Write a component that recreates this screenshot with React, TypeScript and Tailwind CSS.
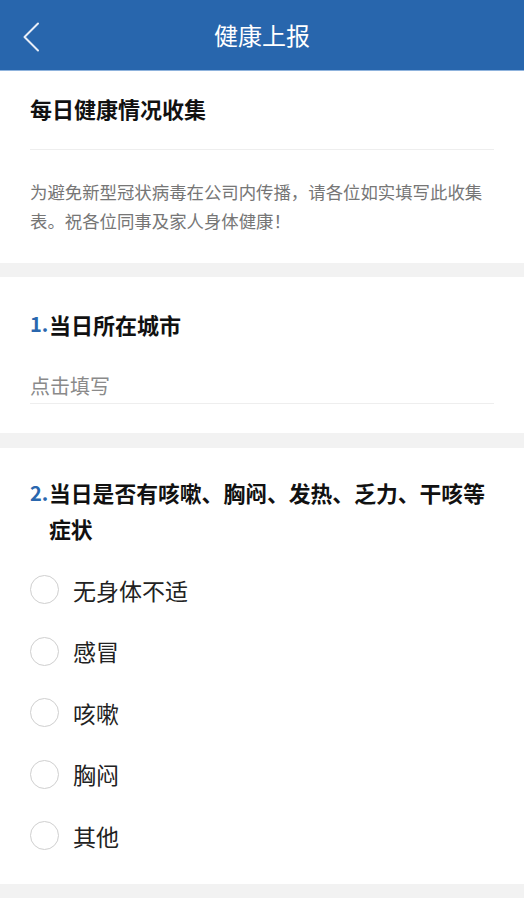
import React from "react";

const font = { fontFamily: '"Noto Sans CJK SC", "Noto Sans", sans-serif' };

const options = ["无身体不适", "感冒", "咳嗽", "胸闷", "其他"];

export default function App() {
  return (
    <div className="w-[524px] min-h-[898px] bg-[#f2f2f2]" style={font}>
      <div className="h-[71px] bg-[#2866ad] border-b border-[#8fb3dd] flex items-center relative">
        <svg className="absolute left-[22px] top-[22px]" width="18" height="30" viewBox="0 0 18 30" fill="none">
          <path d="M16 1.5 L2.5 15 L16 28.5" stroke="#e8eef7" strokeWidth="2" strokeLinecap="round" strokeLinejoin="round" />
        </svg>
        <div className="flex-1 text-center text-white text-[24px] leading-[32px]">健康上报</div>
      </div>

      <div className="bg-white px-[30px] pt-[22px] pb-[28px]">
        <div className="text-[22px] leading-[30px] font-bold text-[#111]">每日健康情况收集</div>
        <div className="mt-[26px] border-t border-[#eeeeee]" />
        <div className="mt-[27px] text-[17.4px] leading-[29px] text-[#767676]">
          为避免新型冠状病毒在公司内传播，请各位如实填写此收集表。祝各位同事及家人身体健康！
        </div>
      </div>

      <div className="h-[14px]" />

      <div className="bg-white px-[30px] pt-[32px] pb-[29px]">
        <div className="flex text-[22px] leading-[30px] font-bold">
          <span className="text-[#2a67ae] text-[20px] w-[19px] shrink-0">1.</span>
          <span className="text-[#111]">当日所在城市</span>
        </div>
        <div className="mt-[32px] border-b border-[#eeeeee] pb-[2px] text-[20px] leading-[30px] text-[#8a8a8a]">
          点击填写
        </div>
      </div>

      <div className="h-[15px]" />

      <div className="bg-white px-[30px] pt-[27px] pb-[17px]">
        <div className="flex text-[21.8px] leading-[36px] font-bold">
          <span className="text-[#2a67ae] text-[20px] w-[19px] shrink-0">2.</span>
          <div className="text-[#111] flex flex-col">
            <span className="whitespace-nowrap">当日是否有咳嗽、胸闷、发热、乏力、干咳等</span>
            <span>症状</span>
          </div>
        </div>
        <div className="mt-[12px] flex flex-col">
          {options.map((o) => (
            <div key={o} className="h-[61.5px] flex items-center">
              <div className="w-[29px] h-[29px] rounded-full border-[1.5px] border-[#cfcfcf] shrink-0" />
              <span className="ml-[14px] text-[23px] leading-[30px] text-[#222]">{o}</span>
            </div>
          ))}
        </div>
      </div>

      <div className="h-[12px]" />
    </div>
  );
}
